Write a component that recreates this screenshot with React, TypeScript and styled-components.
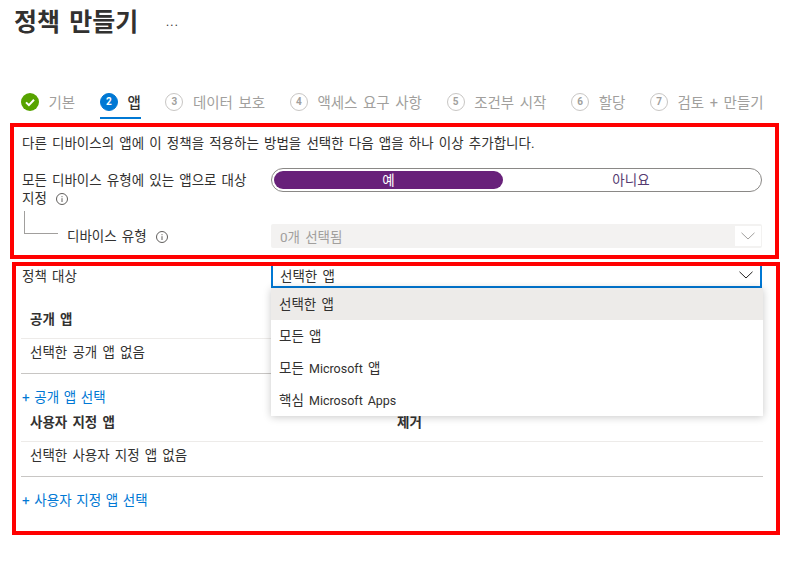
import React from 'react';
import styled, { createGlobalStyle } from 'styled-components';

const GlobalStyle = createGlobalStyle`
  html, body {
    margin: 0;
    padding: 0;
    background: #fff;
  }
  body {
    font-family: Roboto, "Noto Sans CJK KR", sans-serif;
    font-size: 13.5px;
    word-spacing: 1.8px;
    color: #323130;
  }
`;

const Page = styled.div`
  width: 808px;
  height: 561px;
  overflow: hidden;
`;

const TitleRow = styled.div`
  display: flex;
  align-items: center;
  height: 45px;
  padding-left: 14px;
`;
const Title = styled.h1`
  margin: 0;
  width: 152px;
  font-size: 25px;
  word-spacing: 3px;
  line-height: 45px;
  font-weight: 700;
  color: #323130;
  white-space: nowrap;
`;
const More = styled.span`
  margin-bottom: 2px;
  font-size: 12px;
  line-height: 12px;
  letter-spacing: 1.2px;
  color: #323130;
`;

const Steps = styled.div`
  display: flex;
  gap: 24.7px;
  margin-top: 41px;
  padding-left: 21px;
  height: 33px;
`;
const Step = styled.div<{ $active?: boolean }>`
  display: flex;
  align-items: center;
  gap: 9.5px;
  height: 33px;
  white-space: nowrap;
  font-size: 14.5px;
  word-spacing: 2px;
  color: ${(p) => (p.$active ? '#323130' : '#a19f9d')};
  font-weight: ${(p) => (p.$active ? 500 : 400)};
  border-bottom: 2px solid ${(p) => (p.$active ? '#0078d4' : 'transparent')};
  box-sizing: border-box;
`;
const StepDot = styled.span<{ $active?: boolean }>`
  display: flex;
  align-items: center;
  justify-content: center;
  width: 18px;
  height: 18px;
  box-sizing: border-box;
  border-radius: 50%;
  font-size: 10px;
  font-weight: 700;
  color: ${(p) => (p.$active ? '#fff' : '#a19f9d')};
  background: ${(p) => (p.$active ? '#0078d4' : '#fff')};
  border: 1px solid ${(p) => (p.$active ? '#0078d4' : '#c8c6c4')};
`;

const FirstBox = styled.section`
  box-sizing: border-box;
  width: 769px;
  height: 136px;
  margin-left: 10px;
  margin-top: 4px;
  border: 4px solid #f00;
  padding: 4px 0 0 8px;
`;
const SecondBox = styled.section`
  position: relative;
  box-sizing: border-box;
  width: 768px;
  height: 273px;
  margin-left: 12px;
  margin-top: 3px;
  border: 4px solid #f00;
  padding: 0 0 0 6px;
`;

const Lead = styled.p`
  margin: 0;
  line-height: 24px;
  white-space: nowrap;
`;
const FormRow = styled.div`
  display: grid;
  grid-template-columns: 249px 491px;
  margin-top: 13px;
`;
const LabelText = styled.div`
  line-height: 18px;
  margin-top: 3px;
`;
const Info = styled.svg`
  width: 12px;
  height: 12px;
  margin-left: 9px;
  vertical-align: -2px;
  fill: none;
  stroke: #605e5c;
`;
const Toggle = styled.div`
  box-sizing: border-box;
  display: grid;
  grid-template-columns: 229px 1fr;
  height: 24px;
  padding: 2px;
  border: 1px solid #8a8886;
  border-radius: 12px;
  text-align: center;
  line-height: 18px;
`;
const ToggleOn = styled.div`
  background: #68217a;
  color: #fff;
  border-radius: 9px;
`;
const ToggleOff = styled.div`
  color: #553a70;
`;

const DeviceRow = styled.div`
  display: grid;
  grid-template-columns: 45px 204px 491px;
  height: 48px;
`;
const Connector = styled.div`
  box-sizing: border-box;
  width: 34px;
  height: 23px;
  margin: 4px 0 0 2px;
  border-left: 1px solid #a19f9d;
  border-bottom: 1px solid #a19f9d;
`;
const DeviceLabel = styled.div`
  line-height: 18px;
  margin-top: 20px;
`;
const DisabledSelect = styled.div`
  box-sizing: border-box;
  display: flex;
  align-items: center;
  justify-content: space-between;
  height: 24px;
  margin-top: 17px;
  padding: 2px 1px 2px 9px;
  background: #f3f2f1;
  color: #a19f9d;
  border-radius: 2px;
`;
const ChevronBox = styled.span<{ $disabled?: boolean }>`
  display: flex;
  align-items: center;
  justify-content: center;
  width: 26px;
  height: 20px;
  background: ${(p) => (p.$disabled ? '#fff' : 'transparent')};
  color: ${(p) => (p.$disabled ? '#a19f9d' : '#201f1e')};
`;

const TargetRow = styled.div`
  display: grid;
  grid-template-columns: 249px 491px;
  height: 22px;
`;
const TargetLabel = styled.div`
  line-height: 18px;
  margin-top: 1px;
`;
const OpenSelect = styled.div`
  box-sizing: border-box;
  display: flex;
  align-items: center;
  justify-content: space-between;
  height: 22px;
  padding: 0 1px 2px 7px;
  border: 2px solid #0078d4;
  border-top: 0;
  color: #323130;
`;
const Menu = styled.ul`
  position: absolute;
  z-index: 2;
  top: 22px;
  left: 255px;
  width: 492px;
  margin: 0;
  padding: 0;
  list-style: none;
  background: #fff;
  box-shadow: 0 1px 8px rgba(0, 0, 0, 0.22);
`;
const MenuItem = styled.li<{ $selected?: boolean }>`
  height: 32px;
  line-height: 32px;
  padding-left: 8px;
  background: ${(p) => (p.$selected ? '#edebe9' : 'transparent')};
`;
const Latin = styled.span`
  font-size: 12.5px;
  word-spacing: 1.8px;
`;

const AppTable = styled.div<{ $gap: number }>`
  width: 742px;
  margin-top: ${(p) => p.$gap}px;
  margin-left: -1px;
`;
const TableHead = styled.div`
  box-sizing: border-box;
  display: grid;
  grid-template-columns: 367px 1fr;
  height: 30px;
  line-height: 20px;
  padding-left: 9px;
  border-bottom: 1px solid #edebe9;
  font-weight: 700;
`;
const EmptyRow = styled.div`
  height: 34px;
  line-height: 26px;
  padding-left: 9px;
  border-bottom: 1px solid #c8c6c4;
`;
const AddLink = styled.a`
  display: block;
  height: 22px;
  margin: 12px 0 0 1px;
  line-height: 22px;
  word-spacing: 1.3px;
  color: #0078d4;
  white-space: nowrap;
`;

const InfoIcon = () => (
  <Info viewBox="0 0 12 12">
    <circle cx="6" cy="6" r="5.5" />
    <path d="M6 5.2V9M6 3.2v1" />
  </Info>
);

const Chevron = () => (
  <svg width="14" height="8" viewBox="0 0 14 8" fill="none" stroke="currentColor" strokeWidth="1">
    <path d="M0.5 0.8L7 7L13.5 0.8" />
  </svg>
);

const Check = () => (
  <svg width="18" height="18" viewBox="0 0 18 18">
    <circle cx="9" cy="9" r="9" fill="#57a300" />
    <path d="M5 9.4L7.9 12.2L13 6.8" fill="none" stroke="#fff" strokeWidth="2" />
  </svg>
);

const steps = ['데이터 보호', '액세스 요구 사항', '조건부 시작', '할당', '검토 + 만들기'];

const App = () => (
  <Page>
    <GlobalStyle />
    <TitleRow>
      <Title>정책 만들기</Title>
      <More>...</More>
    </TitleRow>
    <Steps>
      <Step>
        <Check />
        기본
      </Step>
      <Step $active>
        <StepDot $active>2</StepDot>앱
      </Step>
      {steps.map((label, i) => (
        <Step key={label}>
          <StepDot>{i + 3}</StepDot>
          {label}
        </Step>
      ))}
    </Steps>
    <FirstBox>
      <Lead>다른 디바이스의 앱에 이 정책을 적용하는 방법을 선택한 다음 앱을 하나 이상 추가합니다.</Lead>
      <FormRow>
        <LabelText>
          모든 디바이스 유형에 있는 앱으로 대상
          <br />
          지정
          <InfoIcon />
        </LabelText>
        <Toggle>
          <ToggleOn>예</ToggleOn>
          <ToggleOff>아니요</ToggleOff>
        </Toggle>
      </FormRow>
      <DeviceRow>
        <Connector />
        <DeviceLabel>
          디바이스 유형
          <InfoIcon />
        </DeviceLabel>
        <DisabledSelect>
          0개 선택됨
          <ChevronBox $disabled>
            <Chevron />
          </ChevronBox>
        </DisabledSelect>
      </DeviceRow>
    </FirstBox>
    <SecondBox>
      <TargetRow>
        <TargetLabel>정책 대상</TargetLabel>
        <OpenSelect>
          선택한 앱
          <ChevronBox>
            <Chevron />
          </ChevronBox>
        </OpenSelect>
      </TargetRow>
      <Menu>
        <MenuItem $selected>선택한 앱</MenuItem>
        <MenuItem>모든 앱</MenuItem>
        <MenuItem>
          모든 <Latin>Microsoft</Latin> 앱
        </MenuItem>
        <MenuItem>
          핵심 <Latin>Microsoft Apps</Latin>
        </MenuItem>
      </Menu>
      <AppTable $gap={21}>
        <TableHead>
          <span>공개 앱</span>
          <span>제거</span>
        </TableHead>
        <EmptyRow>선택한 공개 앱 없음</EmptyRow>
        <AddLink>+ 공개 앱 선택</AddLink>
      </AppTable>
      <AppTable $gap={4}>
        <TableHead>
          <span>사용자 지정 앱</span>
          <span>제거</span>
        </TableHead>
        <EmptyRow>선택한 사용자 지정 앱 없음</EmptyRow>
        <AddLink>+ 사용자 지정 앱 선택</AddLink>
      </AppTable>
    </SecondBox>
  </Page>
);

export default App;
